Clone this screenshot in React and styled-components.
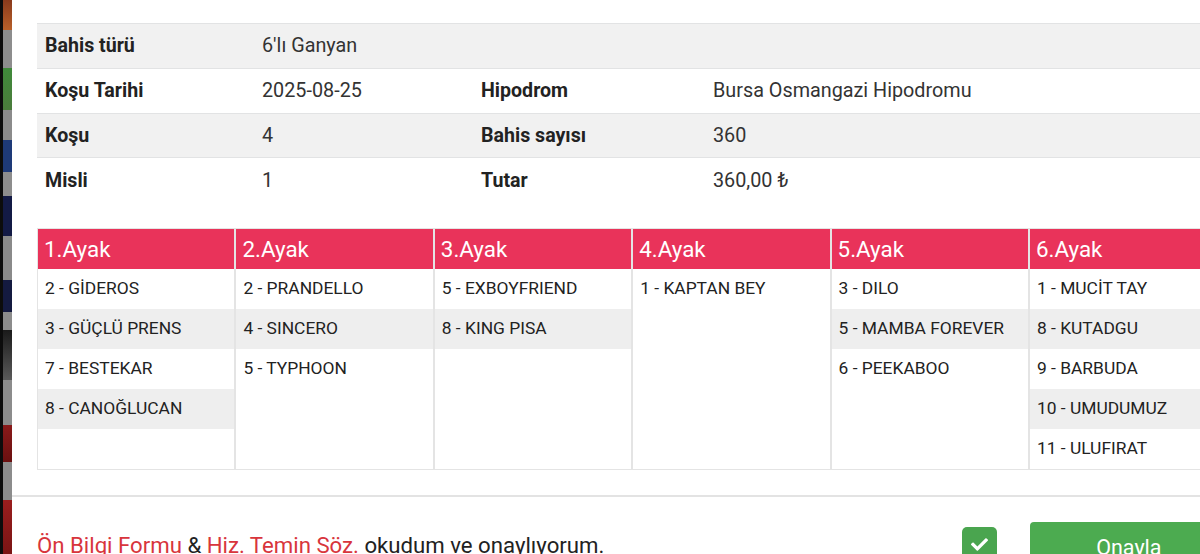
import React from "react"
import styled, { createGlobalStyle } from "styled-components"
import { FaCheck } from "react-icons/fa"

const GlobalStyle = createGlobalStyle`
  html, body {
    margin: 0;
    padding: 0;
    background: #ffffff;
    overflow: hidden;
    font-family: Roboto, "Liberation Sans", Arial, sans-serif;
  }
`

const info = [
  [["Bahis türü", "6'lı Ganyan"]],
  [["Koşu Tarihi", "2025-08-25"], ["Hipodrom", "Bursa Osmangazi Hipodromu"]],
  [["Koşu", "4"], ["Bahis sayısı", "360"]],
  [["Misli", "1"], ["Tutar", "360,00 ₺"]],
]

const legs = [
  ["2 - GİDEROS", "3 - GÜÇLÜ PRENS", "7 - BESTEKAR", "8 - CANOĞLUCAN"],
  ["2 - PRANDELLO", "4 - SINCERO", "5 - TYPHOON"],
  ["5 - EXBOYFRIEND", "8 - KING PISA"],
  ["1 - KAPTAN BEY"],
  ["3 - DILO", "5 - MAMBA FOREVER", "6 - PEEKABOO"],
  ["1 - MUCİT TAY", "8 - KUTADGU", "9 - BARBUDA", "10 - UMUDUMUZ", "11 - ULUFIRAT"],
]

export default function App() {
  return (
    <>
      <GlobalStyle />
      <Page>
        <Backdrop />
        <Modal>
          <Content>
            <InfoTable>
              {info.map((row, i) => (
                <InfoRow key={i} $shaded={i % 2 === 0}>
                  {row.map(([label, value]) => (
                    <React.Fragment key={label}>
                      <Label>{label}</Label>
                      <Value>{value}</Value>
                    </React.Fragment>
                  ))}
                </InfoRow>
              ))}
            </InfoTable>

            <LegGrid>
              {legs.map((horses, i) => (
                <LegColumn key={i}>
                  <LegHeader>{i + 1}.Ayak</LegHeader>
                  <LegList>
                    {horses.map((h, j) => (
                      <LegItem key={h} $shaded={j % 2 === 1}>{h}</LegItem>
                    ))}
                  </LegList>
                </LegColumn>
              ))}
            </LegGrid>
          </Content>

          <Divider />

          <Footer>
            <Consent>
              <TextLink>Ön Bilgi Formu</TextLink> &amp; <TextLink>Hiz. Temin Söz.</TextLink> okudum ve onaylıyorum.
            </Consent>
            <CheckBox>
              <FaCheck size={17} />
            </CheckBox>
            <ConfirmButton>Onayla</ConfirmButton>
          </Footer>
        </Modal>
      </Page>
    </>
  )
}

const Page = styled.div`
  display: flex;
  height: 554px;
  overflow: hidden;
`

const Backdrop = styled.div`
  flex: 0 0 9px;
  border-left: 3px solid #0c0c0c;
  background: linear-gradient(
    to bottom,
    #8a3a1c 0px, #b8602a 30px,
    #8d8d8d 30px, #8d8d8d 68px,
    #3f8a3a 68px, #4b7c3c 110px,
    #8b8b8b 110px, #8b8b8b 140px,
    #1e3a78 140px, #1e3a78 172px,
    #8d8d8d 172px, #8d8d8d 196px,
    #131a45 196px, #131a45 236px,
    #8a8a8a 236px, #8a8a8a 280px,
    #141a40 280px, #141a40 312px,
    #8c8c8c 312px, #8c8c8c 330px,
    #1a1a1a 330px, #5a5a5a 380px,
    #8c8c8c 380px, #8c8c8c 425px,
    #8a1a1a 425px, #6a1010 462px,
    #8c8c8c 462px, #8c8c8c 500px,
    #9a1e1e 500px, #7a1414 554px
  );
`

const Modal = styled.div`
  flex: 0 0 1240px;
  background: #ffffff;
`

const Content = styled.div`
  padding: 23px 25px 0 25px;
`

const InfoTable = styled.div`
  border-top: 1px solid #e2e3e4;
`

const InfoRow = styled.div`
  display: grid;
  grid-template-columns: 217px 219px 232px 1fr;
  align-items: center;
  height: 44.75px;
  box-sizing: border-box;
  background: ${p => (p.$shaded ? "#f1f1f1" : "#ffffff")};
  border-bottom: 1px solid #e2e3e4;
  &:last-child {
    border-bottom: none;
  }
`

const Label = styled.div`
  padding-left: 8px;
  font-size: 19.6px;
  font-weight: 700;
  color: #222;
`

const Value = styled.div`
  padding-left: 8px;
  font-size: 19.8px;
  color: #333;
`

const LegGrid = styled.div`
  display: grid;
  grid-template-columns: repeat(6, 198.4px);
  margin-top: 25px;
`

const LegColumn = styled.div`
  border: 1px solid #e4e4e4;
  display: flex;
  flex-direction: column;
`

const LegHeader = styled.div`
  height: 40px;
  line-height: 40px;
  background: #e9335a;
  color: #ffffff;
  font-size: 22.4px;
  padding-left: 6px;
`

const LegList = styled.div`
  height: 200px;
`

const LegItem = styled.div`
  height: 40px;
  line-height: 39px;
  padding-left: 7px;
  font-size: 17.4px;
  color: #222;
  background: ${p => (p.$shaded ? "#eeeeee" : "#ffffff")};
`

const Divider = styled.div`
  height: 2px;
  background: #e3e3e3;
  margin-top: 25px;
`

const Footer = styled.div`
  display: flex;
  align-items: flex-start;
  padding: 25px 25px 0 25px;
`

const Consent = styled.div`
  font-size: 22.2px;
  line-height: 45px;
  color: #222;
  padding-top: 1px;
  white-space: nowrap;
`

const TextLink = styled.span`
  color: #d8353c;
`

const CheckBox = styled.div`
  margin-left: auto;
  margin-top: 5px;
  width: 35px;
  height: 35px;
  border-radius: 5px;
  background: #4aa54f;
  color: #ffffff;
  display: flex;
  align-items: center;
  justify-content: center;
`

const ConfirmButton = styled.button`
  margin-left: 33px;
  width: 197px;
  height: 46px;
  border: none;
  border-radius: 4px;
  background: #4cab50;
  color: #ffffff;
  font-family: Roboto, "Liberation Sans", Arial, sans-serif;
  font-size: 21.5px;
  padding-top: 6px;
`
